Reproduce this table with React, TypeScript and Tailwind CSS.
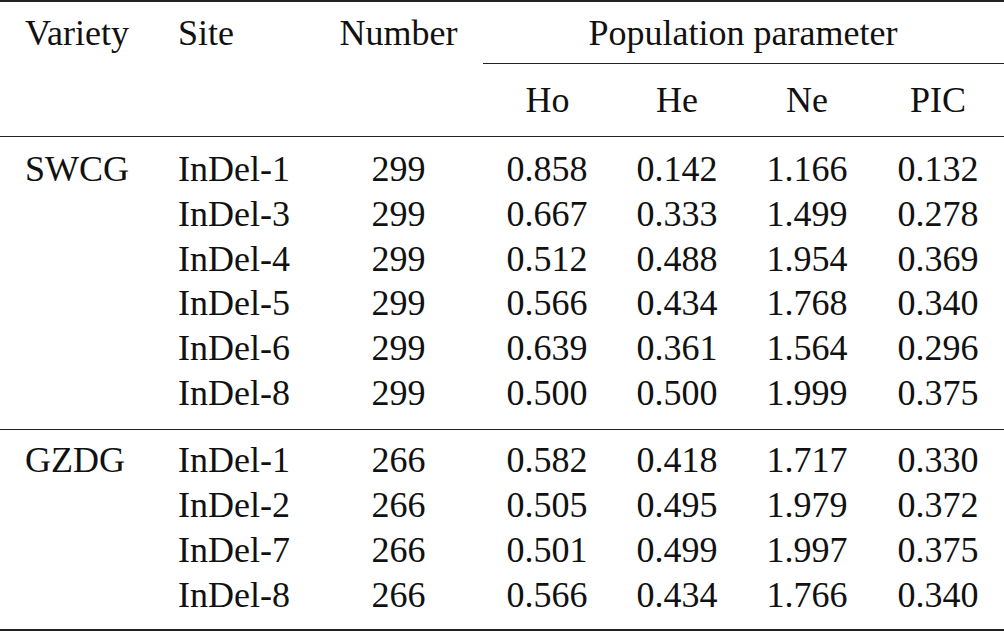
import React from "react";

const cols = "grid grid-cols-[153px_162px_167px_130px_130px_130px_132px]";

const groups = [
  {
    variety: "SWCG",
    number: "299",
    rows: [
      ["InDel-1", "0.858", "0.142", "1.166", "0.132"],
      ["InDel-3", "0.667", "0.333", "1.499", "0.278"],
      ["InDel-4", "0.512", "0.488", "1.954", "0.369"],
      ["InDel-5", "0.566", "0.434", "1.768", "0.340"],
      ["InDel-6", "0.639", "0.361", "1.564", "0.296"],
      ["InDel-8", "0.500", "0.500", "1.999", "0.375"],
    ],
    pad: "pt-[10px] pb-[14px] border-b border-[#222]",
  },
  {
    variety: "GZDG",
    number: "266",
    rows: [
      ["InDel-1", "0.582", "0.418", "1.717", "0.330"],
      ["InDel-2", "0.505", "0.495", "1.979", "0.372"],
      ["InDel-7", "0.501", "0.499", "1.997", "0.375"],
      ["InDel-8", "0.566", "0.434", "1.766", "0.340"],
    ],
    pad: "pt-[8px] pb-[12px] border-b-2 border-[#222]",
  },
];

export default function App() {
  return (
    <div className="w-[1004px] h-[631px] bg-white text-[#111] text-[36px] overflow-hidden font-['Liberation_Serif','Times_New_Roman',serif]">
      <div className="border-t-2 border-[#222]">
        {/* header */}
        <div className={`${cols} h-[61px] items-center leading-none`}>
          <div className="pl-[25px]">Variety</div>
          <div className="pl-[25px]">Site</div>
          <div className="text-center">Number</div>
          <div className="col-span-4 text-center">Population parameter</div>
        </div>
        <div className={`${cols} border-b border-[#222]`}>
          <div className="col-span-3" />
          <div className="col-span-4 ml-[1px] border-t border-[#222] h-[73px] grid grid-cols-[129px_130px_130px_132px] items-center leading-none text-center">
            <div>Ho</div>
            <div>He</div>
            <div>Ne</div>
            <div>PIC</div>
          </div>
        </div>

        {/* body */}
        {groups.map((g, gi) => (
          <div key={gi} className={g.pad}>
            {g.rows.map((r, i) => (
              <div key={i} className={`${cols} h-[44.7px] items-center leading-none`}>
                <div className="pl-[25px]">{i === 0 ? g.variety : ""}</div>
                <div className="pl-[25px]">{r[0]}</div>
                <div className="text-center">{g.number}</div>
                <div className="text-center">{r[1]}</div>
                <div className="text-center">{r[2]}</div>
                <div className="text-center">{r[3]}</div>
                <div className="text-center">{r[4]}</div>
              </div>
            ))}
          </div>
        ))}
      </div>
    </div>
  );
}
